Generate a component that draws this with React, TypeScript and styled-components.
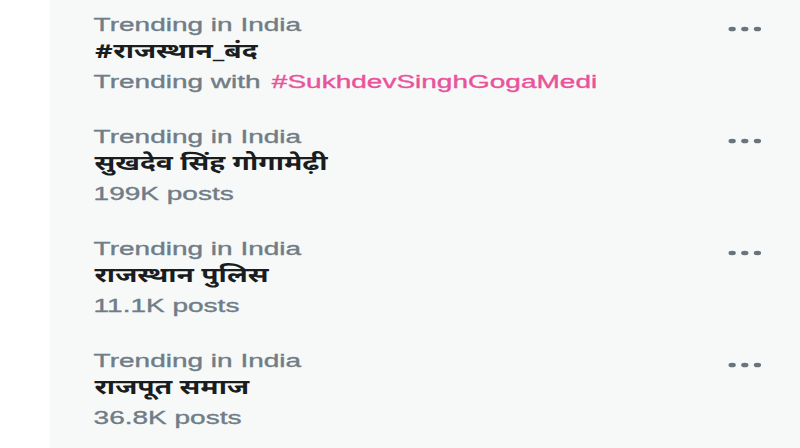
import React from "react";
import styled, { createGlobalStyle } from "styled-components";

const GlobalStyle = createGlobalStyle`
  html, body {
    margin: 0;
    padding: 0;
    background: #ffffff;
    overflow: hidden;
  }
`;

const SCALE_X = 1.6;

const Stage = styled.div`
  width: ${800 / SCALE_X}px;
  height: 448px;
  display: flex;
  transform: scaleX(${SCALE_X});
  transform-origin: 0 0;
  font-family: "Liberation Sans", "Noto Sans Devanagari", "Lohit Devanagari", "Noto Sans", sans-serif;
`;

const Gutter = styled.div`
  width: 31px;
  flex: none;
  background: #ffffff;
`;

const Panel = styled.section`
  flex: 1;
  background: #f7f9f9;
  padding: 0 24px 0 27.5px;
  display: flex;
  flex-direction: column;
  & > :first-child {
    padding-top: 10.5px;
  }
`;

const TrendRow = styled.div`
  display: flex;
  justify-content: space-between;
  align-items: flex-start;
  padding: 14px 0 13px;
`;

const TrendInfo = styled.div`
  display: flex;
  flex-direction: column;
  min-width: 0;
`;

const Meta = styled.div`
  font-size: 17.5px;
  line-height: 28px;
  color: #717d86;
  -webkit-text-stroke: 0.35px currentColor;
  white-space: nowrap;
`;

const Title = styled.div`
  font-family: "Noto Sans Devanagari", "Lohit Devanagari", "Liberation Sans", "Noto Sans", sans-serif;
  font-size: 20.5px;
  font-weight: 700;
  line-height: 29px;
  color: #1a1d20;
  white-space: nowrap;
  width: max-content;
  transform: scaleX(0.86);
  transform-origin: 0 50%;
`;

const Hashtag = styled.span`
  color: #e9539c;
  margin-left: 7px;
`;

const MoreButton = styled.button`
  border: none;
  background: none;
  padding: 0;
  margin-top: 15.5px;
  width: 21px;
  height: 6px;
  display: flex;
  color: #6a747c;
`;

const Dots = () => (
  <svg width="21" height="6" viewBox="0 0 21 6" aria-hidden="true">
    <circle cx="2.6" cy="3" r="2.3" fill="currentColor" />
    <circle cx="10.5" cy="3" r="2.3" fill="currentColor" />
    <circle cx="18.4" cy="3" r="2.3" fill="currentColor" />
  </svg>
);

type Trend = {
  title: string;
  posts?: string;
  with?: string;
};

const trends: Trend[] = [
  { title: "#राजस्थान_बंद", with: "#SukhdevSinghGogaMedi" },
  { title: "सुखदेव सिंह गोगामेढ़ी", posts: "199K posts" },
  { title: "राजस्थान पुलिस", posts: "11.1K posts" },
  { title: "राजपूत समाज", posts: "36.8K posts" },
];

export default function App() {
  return (
    <>
      <GlobalStyle />
      <Stage>
        <Gutter />
        <Panel>
          {trends.map((t) => (
            <TrendRow key={t.title}>
              <TrendInfo>
                <Meta>Trending in India</Meta>
                <Title>{t.title}</Title>
                {t.with ? (
                  <Meta>
                    Trending with<Hashtag>{t.with}</Hashtag>
                  </Meta>
                ) : (
                  <Meta>{t.posts}</Meta>
                )}
              </TrendInfo>
              <MoreButton aria-label="More">
                <Dots />
              </MoreButton>
            </TrendRow>
          ))}
        </Panel>
      </Stage>
    </>
  );
}
